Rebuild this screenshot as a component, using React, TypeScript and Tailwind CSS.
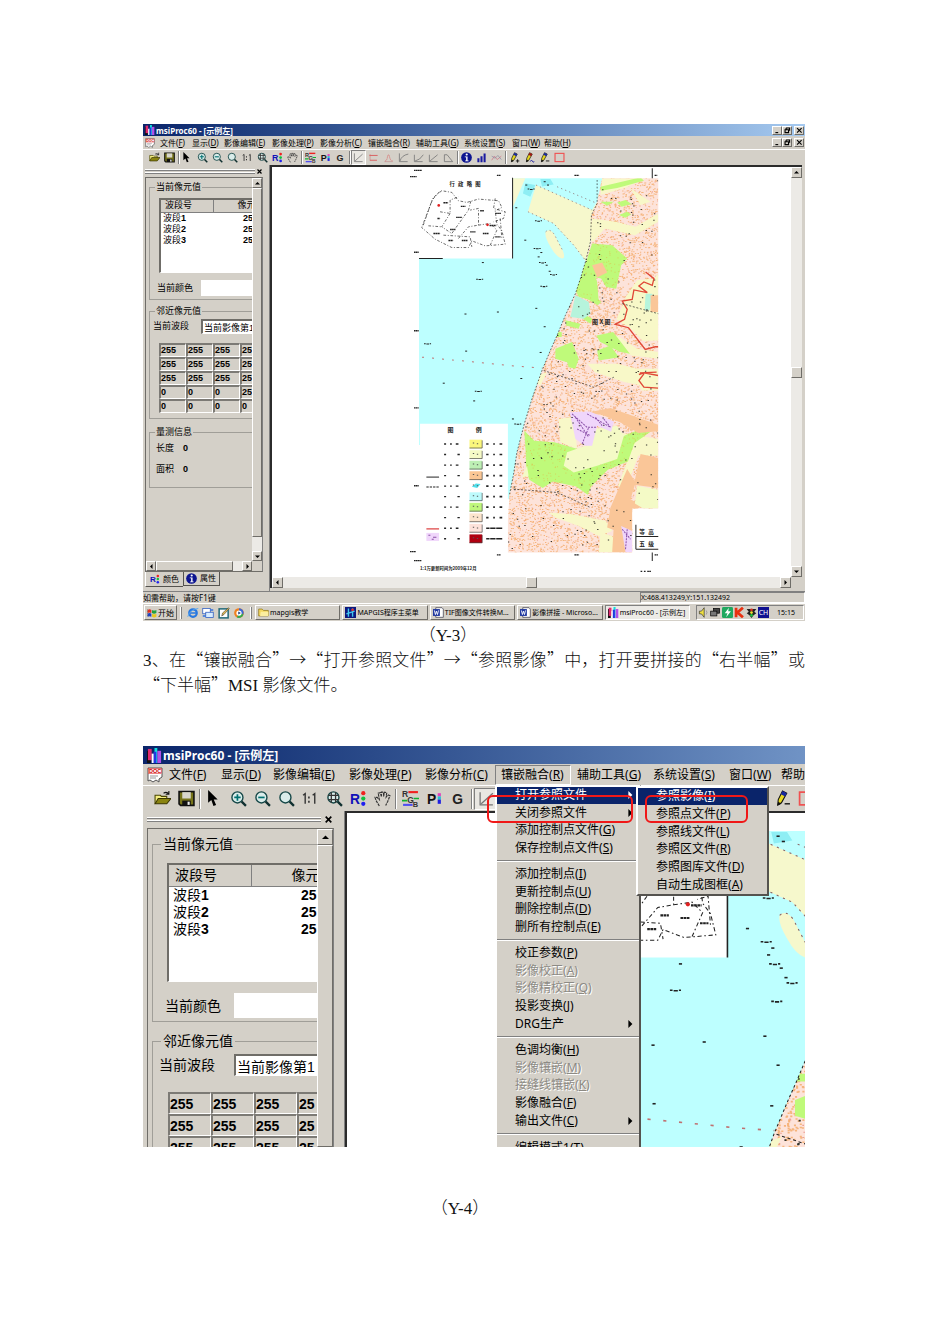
import React from "react";

type Size = "sm" | "lg";

const bevel = "border border-t-white border-l-white border-r-[#6f6d68] border-b-[#6f6d68] bg-[#d4d0c8]";
const sunken = "border border-t-[#808080] border-l-[#808080] border-r-white border-b-white";

/* ---------- sizes shared by the two screens ---------- */

const sizes = {
  sm: {
    title: "h-3 pl-[2px] gap-px text-[8px]",
    titleIcon: "size-[10px]",
    menuBar: "h-[13px] pl-[2px] text-[8px] leading-[12px]",
    docIcon: "size-[10px] mr-[5px]",
    menuShort: "w-8",
    menuWide: "w-12",
    toolbar: "h-4 pl-1",
    tool: "w-[15px] h-[15px]",
    icon: "size-[11px]",
    sep: "w-[3px] h-[13px]",
    dock: "w-[127px] text-[9px] leading-[11px]",
    grip: "h-3 pl-[2px] pr-[7px] gap-[2px] text-[8px]",
    box: "ml-[2px] mr-[6px] h-[395px]",
    scroll: "w-[10px]",
    scrollBtn: "h-[10px]",
    arrow: "size-[5px]",
    content: "pl-[3px] pt-1",
    legend: "ml-[5px] px-px",
    group1: "h-[118px]",
    list: "mt-[5px] ml-[9px] h-[75px]",
    table: "w-[92px]",
    th: "h-3 pl-1",
    td: "h-[11px] pl-[2px]",
    colA: "w-[52px]",
    numCell: "pl-[30px]",
    numHead: "pl-6",
    colorRow: "mt-[7px] ml-[7px] h-4",
    label: "w-[44px]",
    group2: "mt-[6px] h-[113px]",
    bandRow: "mt-[2px] ml-[3px] h-[15px]",
    bandLabel: "w-[48px]",
    grid: "mt-[9px] ml-[9px] w-[108px]",
    cell: "h-[14px] w-[27px] leading-[11px]",
  },
  lg: {
    title: "h-[18px] pl-1 gap-px text-[12px]",
    titleIcon: "size-[15px]",
    menuBar: "h-[21px] pl-1 text-[12px] leading-[20px]",
    docIcon: "size-4 mr-[6px]",
    menuShort: "w-[52px]",
    menuWide: "w-[76px]",
    toolbar: "h-[26px] pl-[7px]",
    tool: "w-6 h-[22px]",
    icon: "size-[17px]",
    sep: "w-1 h-5",
    dock: "w-[202px] text-[14px] leading-[16px]",
    grip: "h-[17px] pl-1 pr-[12px] gap-[4px] text-[12px]",
    box: "ml-1 mr-[10px] flex-1 border-b-0",
    scroll: "w-[16px]",
    scrollBtn: "h-[16px]",
    arrow: "size-[7px]",
    content: "pl-1 pt-[7px]",
    legend: "ml-[8px] px-[2px]",
    group1: "h-[186px]",
    list: "mt-[11px] ml-[14px] h-[119px]",
    table: "w-[148px]",
    th: "h-[21px] pl-[6px]",
    td: "h-[17px] pl-[4px]",
    colA: "w-[82px]",
    numCell: "pl-[50px]",
    numHead: "pl-10",
    colorRow: "mt-[11px] ml-[12px] h-[25px]",
    label: "w-[69px]",
    group2: "mt-[11px] h-[180px]",
    bandRow: "mt-[5px] ml-[6px] h-[22px]",
    bandLabel: "w-[75px]",
    grid: "mt-[16px] ml-[15px] w-[172px]",
    cell: "h-[22px] w-[43px] leading-[18px]",
  },
};

/* ---------- icons ---------- */

function Svg({ c, children, box = "0 0 16 16" }: { c: string; children: React.ReactNode; box?: string }) {
  return (
    <svg viewBox={box} className={`${c} shrink-0`} aria-hidden="true">
      {children}
    </svg>
  );
}

function AppIcon({ c }: { c: string }) {
  return (
    <Svg c={c}>
      <rect x="0" y="3" width="4" height="13" fill="#111" />
      <rect x="1" y="1" width="4" height="12" fill="#e02a70" />
      <rect x="5" y="6" width="3" height="10" fill="#fff" />
      <rect x="8" y="0" width="3" height="16" fill="#10e0e0" />
      <rect x="7" y="4" width="3" height="12" fill="#2038e0" />
      <rect x="11" y="3" width="4" height="13" fill="#b050e8" />
    </Svg>
  );
}

function DocIcon({ c }: { c: string }) {
  return (
    <Svg c={c}>
      <path d="M1 1h14v9l-3 2v3l-3-2-3 2-3-2-2 1z" fill="#fff" stroke="#555" strokeWidth="1" />
      <rect x="1.500" y="1.500" width="13" height="5" fill="#fff" stroke="#d33" strokeWidth=".6" />
      <text x="2" y="6" fontSize="5.500" fontWeight="700" fill="#d00000" fontFamily="Liberation Sans">DOC</text>
      <path d="M3 9h8M3 11h6" stroke="#999" />
    </Svg>
  );
}

function Lens({ c, children }: { c: string; children?: React.ReactNode }) {
  return (
    <Svg c={c}>
      <circle cx="7" cy="7" r="5.200" fill="#d9ecea" stroke="#164848" strokeWidth="1.300" />
      {children}
      <path d="M11 11l4 4" stroke="#103030" strokeWidth="2.200" />
    </Svg>
  );
}

function Pencil({ c, tip, children }: { c: string; tip: string; children: React.ReactNode }) {
  return (
    <Svg c={c}>
      <path d="M8 1l4 2-5 9-3.500 2 .5-5z" fill="#e8d820" stroke="#111" strokeWidth="1" />
      <path d="M8 1l4 2-1.500 3-4-2z" fill={tip} />
      <path d="M3 15l1-4 3 2z" fill="#111" />
      {children}
    </Svg>
  );
}

function InfoIcon({ c }: { c: string }) {
  return (
    <Svg c={c}>
      <circle cx="8" cy="8" r="7.800" fill="#0c1490" />
      <circle cx="8.300" cy="3.600" r="1.600" fill="#fff" />
      <path d="M5.500 6.500h4v6h1.500v1h-5v-1h1.500V7.500h-2z" fill="#fff" />
    </Svg>
  );
}

const toolIcons: { name: string; draw: (c: string) => React.ReactNode; on?: boolean }[] = [
  { name: "打开", draw: (c) => (
    <Svg c={c}>
      <path d="M1 13V5h5l1 1h5v3" fill="#f4ee80" stroke="#4a4600" />
      <path d="M1 13l3-5h12l-4 5z" fill="#8a8410" stroke="#3a3600" />
      <path d="M9 3q3-2 5 1M14 1v3h-3" fill="none" stroke="#111" />
    </Svg>) },
  { name: "保存", draw: (c) => (
    <Svg c={c}>
      <path d="M1 1.500h14v13H2.500L1 13z" fill="#77741a" stroke="#111" strokeWidth="1.500" />
      <rect x="4" y="2" width="8" height="6" fill="#d8d6cc" />
      <rect x="4" y="10" width="8" height="4.500" fill="#111" />
      <rect x="9" y="11" width="2" height="3" fill="#eee" />
    </Svg>) },
  { name: "|", draw: () => null },
  { name: "选择", draw: (c) => <Svg c={c}><path d="M2 0v12l3-2.500L7 15l2.500-1-2.200-5H11z" fill="#000" /></Svg> },
  { name: "放大", draw: (c) => <Lens c={c}><path d="M4 7h6M7 4v6" stroke="#007070" strokeWidth="1.600" /></Lens> },
  { name: "缩小", draw: (c) => <Lens c={c}><path d="M4 7h6" stroke="#007070" strokeWidth="1.600" /></Lens> },
  { name: "窗口", draw: (c) => <Lens c={c} /> },
  { name: "原始比例", draw: (c) => (
    <Svg c={c}><path d="M1 5l2-1.500V13M10 5l2-1.500V13" fill="none" stroke="#333" strokeWidth="1.300" /><path d="M6.500 6v2M6.500 10v2" stroke="#333" strokeWidth="1.500" /></Svg>) },
  { name: "全图", draw: (c) => <Lens c={c}><path d="M2 5h10M2 9h10M5 2v10M9 2v10" stroke="#333" strokeWidth="1.200" /></Lens> },
  { name: "红绿蓝", draw: (c) => (
    <Svg c={c}>
      <text x="0" y="13" fontSize="13" fontWeight="700" fill="#1010b8" fontFamily="Liberation Sans">R</text>
      <circle cx="12.500" cy="3" r="2" fill="#f02020" /><circle cx="12.500" cy="8" r="2" fill="#10c040" /><circle cx="12.500" cy="13" r="2" fill="#2020f0" />
    </Svg>) },
  { name: "漫游", draw: (c) => (
    <Svg c={c}>
      <path d="M5 15l-3-5-1-3 2 0 2 2-1-6 2-.5 1 4V2h2v4l1-4 2 .5-.5 4 1.500-2 2 1-2 5-2 4" fill="none" stroke="#333" strokeWidth="1.100" strokeDasharray="2.500 .8" />
    </Svg>) },
  { name: "|", draw: () => null },
  { name: "波段组合", draw: (c) => (
    <Svg c={c}>
      <text x="0" y="7" fontSize="8" fontWeight="700" fill="#333" fontFamily="Liberation Sans">R</text>
      <text x="5" y="12" fontSize="8" fontWeight="700" fill="#333" fontFamily="Liberation Sans">G</text>
      <text x="10" y="16" fontSize="7" fontWeight="700" fill="#333" fontFamily="Liberation Sans">B</text>
      <path d="M6 2h9" stroke="#f02020" strokeWidth="2" /><path d="M0 10h5M11 8h5" stroke="#10b030" strokeWidth="1.500" /><path d="M1 14h9" stroke="#5050f0" strokeWidth="2" />
    </Svg>) },
  { name: "调色板", draw: (c) => (
    <Svg c={c}>
      <text x="1" y="13" fontSize="13" fontWeight="700" fill="#111" fontFamily="Liberation Sans">P</text>
      <rect x="11" y="3" width="3" height="3" fill="#e040c0" /><rect x="11" y="6" width="3" height="3" fill="#20c0d0" /><rect x="11" y="9" width="3" height="4" fill="#2020e0" />
    </Svg>) },
  { name: "灰度", draw: (c) => (
    <Svg c={c}><text x="2" y="13" fontSize="13" fontWeight="700" fill="#222" fontFamily="Liberation Sans">G</text></Svg>) },
  { name: "||", draw: () => null },
  { name: "线性", on: true, draw: (c) => <Svg c={c}><path d="M2 2v12h12M3 13L14 3" fill="none" stroke="#777" strokeWidth="1.200" /></Svg> },
  { name: "均衡", draw: (c) => <Svg c={c}><path d="M3 3v10" fill="none" stroke="#c88" /><path d="M2 5h12M3 12h10" stroke="#d86060" strokeWidth="1.400" /></Svg> },
  { name: "正态", draw: (c) => <Svg c={c}><path d="M2 14h12" fill="none" stroke="#c09090" /><path d="M3 13c4 0 3-9 5-9s1 9 6 9" fill="none" stroke="#d87070" strokeWidth="1.200" strokeDasharray="2 1" /></Svg> },
  { name: "对数", draw: (c) => <Svg c={c}><path d="M2 2v12h12M3 13Q5 5 15 3" fill="none" stroke="#777" strokeWidth="1.200" /></Svg> },
  { name: "指数", draw: (c) => <Svg c={c}><path d="M2 4v10h12M3 13Q10 12 15 4" fill="none" stroke="#777" strokeWidth="1.200" /></Svg> },
  { name: "平方", draw: (c) => <Svg c={c}><path d="M2 4v10h12M3 13L14 4" fill="none" stroke="#777" strokeWidth="1.200" /></Svg> },
  { name: "反转", draw: (c) => <Svg c={c}><path d="M2 4v10h12L6 4H2" fill="none" stroke="#777" strokeWidth="1.200" /></Svg> },
  { name: "|", draw: () => null },
  { name: "信息", draw: (c) => <InfoIcon c={c} /> },
  { name: "直方图", draw: (c) => <Svg c={c}><path d="M3.500 9v6M8 6v9M12.500 2v13" stroke="#1a1aa0" strokeWidth="3" /></Svg> },
  { name: "曲线", draw: (c) => <Svg c={c}><path d="M1 12l4-6 4 5 6-5" fill="none" stroke="#d07080" /><path d="M1 6l5 3 4-4 5 6" fill="none" stroke="#8888a0" /></Svg> },
  { name: "|", draw: () => null },
  { name: "添加", draw: (c) => <Pencil c={c} tip="#1828a0"><path d="M10 13h5M12.500 10.500v5" stroke="#111" strokeWidth="1.300" /></Pencil> },
  { name: "修改", draw: (c) => <Pencil c={c} tip="#a01818"><path d="M9 14q2-4 3-1t3 1" fill="none" stroke="#2020a0" strokeWidth="1.300" /></Pencil> },
  { name: "删除", draw: (c) => <Pencil c={c} tip="#1828a0"><path d="M10 13h5" stroke="#111" strokeWidth="1.300" /></Pencil> },
  { name: "矩形", draw: (c) => <Svg c={c}><rect x="1.500" y="2" width="13" height="12" fill="none" stroke="#f05050" strokeWidth="1.600" /></Svg> },
];

function Tri({ c, dir }: { c: string; dir: "up" | "down" | "left" | "right" }) {
  const d = { up: "M0 7l5-5 5 5z", down: "M0 3l5 5 5-5z", left: "M7 0L2 5l5 5z", right: "M3 0l5 5-5 5z" }[dir];
  return <Svg c={c} box="0 0 10 10"><path d={d} fill="#000" /></Svg>;
}

/* ---------- map ---------- */

function random(seed: number) {
  let s = seed;
  return () => {
    s = (s * 16807) % 2147483647;
    return s / 2147483647;
  };
}

function speckle(seed: number, n: number, x0: number, y0: number, x1: number, y1: number, len: number) {
  const r = random(seed);
  let d = "";
  for (let i = 0; i < n; i++) {
    d += `M${Math.round(x0 + r() * (x1 - x0))} ${Math.round(y0 + r() * (y1 - y0))}h${len}`;
  }
  return d;
}

const land =
  "M605 40H773V1028H695V1160H323V1060L328 985 340 925 350 860 372 775 395 700 425 615 450 555 470 510 495 450 525 385 540 340 555 290 570 230 573 150 590 110z";
const orangeDots = speckle(11, 8200, 323, 40, 773, 1160, 4);
const redDots = speckle(29, 700, 323, 40, 773, 1160, 3);
const greenDots = speckle(7, 3000, 323, 40, 773, 1160, 3);
const blackDots = speckle(53, 420, 323, 40, 773, 1160, 4);
const seaMarks = [
  [412, 167], [372, 225], [245, 292], [236, 342], [193, 446], [290, 440], [428, 363], [405, 429], [430, 484], [80, 535],
  [195, 557], [418, 561], [457, 328], [420, 262], [412, 275], [424, 292], [436, 300], [445, 318], [408, 250], [128, 653],
  [219, 706], [232, 677], [360, 639], [335, 760], [350, 775], [345, 128], [375, 60], [390, 72], [430, 50], [440, 60],
];
const legendFills = ["#fbf77c", "#f6fac6", "#bdf0b4", "#fac694", "none", "#bdfafc", "#bff77c", "#fce4cc", "#fde2da", "#b00010"];

function MapDrawing({ box, id }: { box: string; id: string }) {
  return (
    <svg viewBox={box} preserveAspectRatio="xMinYMin slice" className="block size-full" role="img" aria-label="示例左">
      <defs>
        <clipPath id={id}><path d={land} /></clipPath>
        <clipPath id={`${id}-green`}>
          <path d="M372 795l30 30 60 5 70 20 40 0 50-15 60-30 55-20 15 12-50 35-20 55-60 25-50 50-10 25-35-25-70-15-30 20-40-25-10-30 0-40zM575 235l60 5 45 40-18 20-15 70-30-5-15-25-50-10-15 20 15 30 30 10 20 20-10 10-50-30-20-20 20-60 15-20z" />
        </clipPath>
      </defs>
      <path d="M57 280H337V40H610L600 300 430 640 325 1000H323V774H60V838H57z" fill="#bdffff" />
      <path d="M337 40h38l-35 82h-3z" fill="#f8f8d0" />
      <path d="M407 60l168 75 15-25-17 60-3 60-14 58-36-48-60-65-77-35z" fill="#f6f8cc" />
      <path d="M436 200q12-12 26 8l26 50q8 24-4 22-18-6-34-36-18-30-14-44z" fill="#f6f8cc" />
      <path d="M375 55l30 5-15 35-22-10zM420 42h30l10 16-35 6z" fill="#8eeef4" />
      <path d={land} fill="#fde3da" />
      <g clipPath={`url(#${id})`}>
        <path d={orangeDots} stroke="#f5b47c" strokeWidth="3" />
        <path d={redDots} stroke="#eb9a92" strokeWidth="2" />
        <g fill="#f8f8c8">
          <path d="M605 40h130l-60 28-75 22zM690 70l60 40-30 10zM575 160l70 10 60 15 68-40v25l-70 40-90-20-35 40-15-10z" />
          <path d="M710 345l50-5 13-15v200l-45 2-40-40-40-25 30-70z" />
          <path d="M590 520l60-10 60 40 63 10v20l-80-10-60-30zM560 595h90l60 15h63v60l-100-20-90-30zM380 640l60-20-20 40z" />
          <path d="M700 620h73v55h-50z" />
          <path d="M475 760l35-5 15 45 5 50-50-20z" />
          <path d="M650 800l123 20v50l-60 0-40 110-20-20 30-80z" />
          <path d="M445 1040l70 5 100 20 20 30-40 15-60-30-70-25zM600 1100l35 10 20 50h-60z" />
        </g>
        <g fill="#bffa7a">
          <path d="M600 65l120-28 10 10-80 22-48 8zM600 110l40 0-20 12zM650 112l25-7 18 12-30 8zM655 150l25-10 12 8-18 10z" />
          <path d="M575 235l60 5 45 40-18 20-15 70-30-5-15-25-50-10-15 20 15 30 30 10 20 20-10 10-50-30-20-20 20-60 15-20z" />
          <path d="M530 340l50-20 10 30 5 60-60-15-10-20z" />
          <path d="M495 465l45 10-5 15-38-10zM588 510l50-10 50 65-30-6-60-30zM590 555l40-15 25 35-60 10zM465 550l50-20 20 50-10 30-20-5-5-15-35-10zM470 500h14v15h-20zM540 440l35 20-5 15-30-20z" />
          <path d="M372 795l30 30 60 5 70 20 40 0 50-15 60-30 55-20 15 12-50 35-20 55-60 25-50 50-10 25-35-25-70-15-30 20-40-25-10-30 0-40z" />
        </g>
        <path d={greenDots} stroke="#dcc050" strokeWidth="2" clipPath={`url(#${id}-green)`} />
        <path d="M500 860l70-25 10-45 70-10 20 30-20 70-60 20-70 20-30-20zM380 900l-15 35 20-5z" fill="#f4fac6" />
        <path d="M510 455l15-65 40 20 5 35-20 15zM735 385h20l-8 50h-15z" fill="#b6f4dc" />
        <g fill="#fac698">
          <path d="M750 390h23v50h-23zM575 300l30-8 15 30-30 15zM540 745l90-18 143 50v20l-60 5-50-30-60-25z" />
          <path d="M720 865l53 12v90l-73-10zM680 910l25 40-15 50 35 20-30 20v60h-35l-40-15 10-60z" />
          <path d="M640 1080l55-20v100h-60z" />
        </g>
        <path d="M710 960l63 12v56h-45l-25-15z" fill="#f4fac6" />
        <path d="M508 740l60-2 72 30-8 30-42-18-15 60-20 0-30-20zM662 1080l33 15v65h-20z" fill="#f0d6fb" />
        <path d="M515 745l45 40 30 0M525 755l40 60M560 745l70 40M530 790l40 20M545 835l20-50M585 755l20 25M610 760l20 25M665 1090l25 30M680 1090l-5 60" fill="none" stroke="#8a50a8" strokeWidth="3" strokeDasharray="6 3" />
        <path d={blackDots} stroke="#34342c" strokeWidth="3" />
        <path d="M735 320l25 20-5 20-25-10-15 12 25 20-40-8-5 28-30 5 15 25-8 30-28 15 40 10 50 65 30-8h18M718 622l50-2M715 627l15-5 43 8M730 625l-15 20 15 20 43 3" fill="none" stroke="#e04838" strokeWidth="4" />
      </g>
      <g fill="none" stroke="#222" strokeWidth="2">
        <path d="M590 45v70l-17 35-3 80-15 60-15 50-15 45-30 65-25 60-20 45-25 60-30 85-23 75-22 85-10 65-12 60" strokeDasharray="5 5" />
        <path d="M407 60l168 75M383 140l77 35 60 65 35 45M470 65l120 50M436 200q12-12 26 8l26 50" strokeDasharray="4 9" stroke="#886060" />
        <path d="M665 415l108 30M340 970l130 10 100 45M430 615l150 50 60-30" strokeDasharray="6 5" />
      </g>
      <path d="M66 575l160 15 120 12 80 6" fill="none" stroke="#c07070" strokeWidth="3" strokeDasharray="6 24" />
      {seaMarks.map(([x, y], i) => (
        <path key={i} d={i % 3 ? `M${x} ${y}h6` : `M${x - 8} ${y}h5m2 1h8m2-1h4`} stroke="#222" strokeWidth="3" />
      ))}
      <g fill="#222" fontFamily="Noto Sans CJK SC" fontWeight="700">
        <text x="575" y="475" fontSize="18">图 X 图</text>
        <text x="148" y="62" fontSize="16">行</text><text x="174" y="62" fontSize="16">政</text>
        <text x="200" y="62" fontSize="16">略</text><text x="225" y="62" fontSize="16">图</text>
        <text x="142" y="798" fontSize="18">图</text><text x="227" y="798" fontSize="18">例</text>
        <text x="60" y="1213" fontSize="13">1:1万更新时间为2009年12月</text>
        <text x="716" y="1104" fontSize="17">等</text><text x="743" y="1104" fontSize="17">高</text>
        <text x="716" y="1139" fontSize="17">五</text><text x="743" y="1139" fontSize="17">级</text>
      </g>
      <path d="M337 38V280M57 280h71M755 10v30M706 1077v73M706 1112h67M706 1150h67M755 1160v25" stroke="#222" strokeWidth="3" />
      <g fill="none" stroke="#222" strokeWidth="2" strokeDasharray="8 5 3 5">
        <path d="M125 77l-25 20-35 90 40 35 50 25 50 0 10-20 40 15 60-5-10-40-15-20-5-40 20-10-10-20-60-5-35 10-25-5-20-25z" />
        <path d="M118 80l-22 25-28 80" />
        <path d="M120 140l30 5v-40l25-10M150 145l-25 40 30 20 50-70 8-30M85 182l40 3M130 210l80 5 5 30M175 220l30-35 30-5v-50l-25 5M235 180l35-5 20 20-20 45M285 100l-5 30 35 10-5 20-30 10M300 160l5 60" />
      </g>
      <path d="M130 113h14M182 124h14M112 160h8M168 157h18M240 137h12M285 145h18M150 193h16M100 205h20M210 200h16M248 205h18M145 226h14M185 226h18M285 215h16M268 181h20M42 16h24M30 35h20M290 31h12M522 31h14M762 31h8M42 261h14M42 496h14M42 727h14M42 960h14M30 1157h18M290 1167h12M522 1167h14M762 1167h10M42 1184h22M720 1216h6m4 0h6m4 0h12" stroke="#222" strokeWidth="4" strokeDasharray="5 1" />
      <circle cx="116" cy="121" r="4" fill="#e02020" /><circle cx="262" cy="179" r="4" fill="#e02020" />
      {legendFills.map((fill, i) => {
        const y = 822 + i * 31.5;
        return (
          <g key={i} transform={`translate(0 ${y})`}>
            {i === 4 ? <path d="M215 15l12-10 14 2-10 12z" fill="#50e0ec" /> : <rect x="208" y="0" width="38" height="26" fill={fill} />}
            {i !== 4 && <path d="M208 25h38V2" fill="none" stroke="#444" strokeWidth="2" />}
            <path d={i % 2 ? "M132 13h6M172 13h7" : "M132 13h6m12 0h5m12 0h8"} stroke="#222" strokeWidth="4" />
            <path d={i > 7 ? "M258 13h10m2 0h16m2 0h18" : "M258 13h7m14 0h5m14 0h8"} stroke="#222" strokeWidth="5" />
            <path d="M218 10h4m8 2h4" stroke="#555" strokeWidth="3" />
          </g>
        );
      })}
      <path d="M79 934h38" stroke="#222" strokeWidth="3" />
      <path d="M79 964h38" stroke="#222" strokeWidth="3" strokeDasharray="7 3" />
      <path d="M79 1089h38" stroke="#e05050" strokeWidth="4" />
      <rect x="79" y="1101" width="38" height="24" fill="#f0d6fb" />
      <path d="M85 1108h6m8 6h10m-14 6h6" stroke="#8a50a8" strokeWidth="3" />
    </svg>
  );
}

/* ---------- window parts ---------- */

function KeyText({ text }: { text: string }) {
  const m = text.match(/^(.*)\((\w)\)$/);
  if (!m) return <>{text}</>;
  return <>{m[1]}(<u>{m[2]}</u>)</>;
}

function WindowButtons() {
  return (
    <span className="ml-auto flex items-center pr-px">
      {[
        ["最小化", "M2 8h4"],
        ["还原", "M3 1.500h5v4M1.500 4h5v4h-5zM3 1.500V4"],
        ["关闭", "M1.500 1.500l6.500 6.500M8 1.500L1.500 8"],
      ].map(([name, d], i) => (
        <button key={name} aria-label={name} className={`${bevel} flex h-[9px] w-[10px] items-center justify-center ${i === 2 ? "ml-[2px]" : ""}`}>
          <Svg c="size-[7px]" box="0 0 10 10"><path d={d} fill="none" stroke="#000" strokeWidth="1.600" /></Svg>
        </button>
      ))}
    </span>
  );
}

function TitleBar({ size }: { size: Size }) {
  const s = sizes[size];
  const sky = size === "sm" ? "to-[#a6caf0]" : "to-[#7093c5]";
  return (
    <header className={`flex shrink-0 items-center bg-linear-to-r from-[#0a246a] ${sky} font-['Noto_Sans','Noto_Sans_CJK_SC',sans-serif] font-bold whitespace-nowrap text-white ${s.title}`}>
      <AppIcon c={s.titleIcon} />
      <span>msiProc60 - [示例左]</span>
      {size === "sm" && <WindowButtons />}
    </header>
  );
}

const menus = ["文件(F)", "显示(D)", "影像编辑(E)", "影像处理(P)", "影像分析(C)", "镶嵌融合(R)", "辅助工具(G)", "系统设置(S)", "窗口(W)", "帮助(H)"];

function MenuBar({ size }: { size: Size }) {
  const s = sizes[size];
  return (
    <nav className={`flex shrink-0 items-center whitespace-nowrap ${s.menuBar}`}>
      <DocIcon c={s.docIcon} />
      {menus.map((m) => {
        const open = size === "lg" && m.startsWith("镶嵌");
        return (
          <div key={m} className={`relative shrink-0 ${m.length > 5 ? s.menuWide : s.menuShort}`}>
            <button className={open ? `${sunken} -ml-[6px] block h-5 w-[76px] pl-[5px] text-left leading-[18px]` : "block"}>
              <KeyText text={m} />
            </button>
            {open && <MergeMenu />}
          </div>
        );
      })}
      {size === "sm" && <WindowButtons />}
    </nav>
  );
}

const mergeGroups = [
  ["打开参照文件", "关闭参照文件", "添加控制点文件(G)", "保存控制点文件(S)"],
  ["添加控制点(I)", "更新控制点(U)", "删除控制点(D)", "删所有控制点(E)"],
  ["校正参数(P)", "影像校正(A)", "影像精校正(Q)", "投影变换(J)", "DRG生产"],
  ["色调均衡(H)", "影像镶嵌(M)", "接缝线镶嵌(K)", "影像融合(F)", "输出文件(C)"],
  ["编辑模式1(T)"],
];
const disabled = ["影像校正(A)", "影像精校正(Q)", "影像镶嵌(M)", "接缝线镶嵌(K)"];
const withArrow = ["打开参照文件", "关闭参照文件", "DRG生产", "输出文件(C)"];
const refItems = ["参照影像(I)", "参照点文件(P)", "参照线文件(L)", "参照区文件(R)", "参照图库文件(D)", "自动生成图框(A)"];

function MenuItem({ text, active }: { text: string; active: boolean }) {
  const off = disabled.includes(text);
  const tone = active ? "bg-[#0a246a] text-white" : off ? "text-[#8c8a84] [text-shadow:1px_1px_0_white]" : "";
  return (
    <button disabled={off} className={`flex flex-1 items-center pr-[5px] pl-[18px] text-left leading-none ${tone}`}>
      <span><KeyText text={text} /></span>
      {withArrow.includes(text) && (
        <span className="ml-auto">
          {active ? <Svg c="size-2" box="0 0 10 10"><path d="M3 0l5 5-5 5z" fill="#fff" /></Svg> : <Tri c="size-2" dir="right" />}
        </span>
      )}
    </button>
  );
}

function MergeMenu() {
  return (
    <div className="absolute top-5 -left-[6px] z-10 w-[146px] border-2 border-t-white border-l-white border-r-[#55534f] border-b-[#55534f] bg-[#d4d0c8]">
      {mergeGroups.map((g, i) => (
        <React.Fragment key={i}>
          {i > 0 && <div className="flex h-[9px] items-center"><hr className="w-full border-t border-b border-t-[#808080] border-b-white" /></div>}
          <div className={`flex flex-col ${g.length === 4 ? "h-[70px]" : g.length === 5 ? "h-[88px]" : "h-[18px]"}`}>
            {g.map((t) => <MenuItem key={t} text={t} active={t === "打开参照文件"} />)}
          </div>
        </React.Fragment>
      ))}
      <div className="absolute -top-px left-[139px] flex h-[110px] w-[133px] flex-col border-2 border-t-white border-l-white border-r-[#55534f] border-b-[#55534f] bg-[#d4d0c8]">
        {refItems.map((t, i) => <MenuItem key={t} text={t} active={i === 0} />)}
      </div>
      <span className="absolute top-2 -left-[10px] h-[28px] w-[146px] rounded-md border-2 border-[#f01818]" />
      <span className="absolute top-2 left-[148px] h-[28px] w-[103px] rounded-md border-2 border-[#f01818]" />
    </div>
  );
}

function Toolbar({ size }: { size: Size }) {
  const s = sizes[size];
  return (
    <div role="toolbar" className={`flex shrink-0 items-center border-t border-t-white ${s.toolbar}`}>
      {toolIcons.map((t, i) =>
        t.name.startsWith("|") ? (
          <span key={i} className={`${s.sep} flex shrink-0 justify-center`}><i className="w-[2px] border-l border-r border-l-[#808080] border-r-white" /></span>
        ) : (
          <button key={i} aria-label={t.name} className={`flex shrink-0 items-center justify-center ${s.tool} ${t.on ? `${sunken} bg-[#e9e7e2]` : ""}`}>
            {t.draw(s.icon)}
          </button>
        ),
      )}
    </div>
  );
}

function Group({ title, c, size, children }: { title: string; c: string; size: Size; children: React.ReactNode }) {
  return (
    <fieldset className={`min-w-0 border border-r-0 border-[#a09e98] ${c}`}>
      <legend className={sizes[size].legend}>{title}</legend>
      {children}
    </fieldset>
  );
}

const cells = [
  ["255", "255", "255", "25"],
  ["255", "255", "255", "25"],
  ["255", "255", "255", "25"],
  ["0", "0", "0", "25"],
  ["0", "0", "0", "0"],
];

function Dock({ size }: { size: Size }) {
  const s = sizes[size];
  const small = size === "sm";
  return (
    <aside className={`flex shrink-0 flex-col border-r border-r-[#808080] font-['Liberation_Sans','Noto_Sans_CJK_SC',sans-serif] ${s.dock}`}>
      <div className={`flex shrink-0 items-center ${s.grip}`}>
        <span className="flex flex-1 flex-col gap-px">
          <i className="border-t border-b border-t-white border-b-[#808080]" />
          <i className="border-t border-b border-t-white border-b-[#808080]" />
        </span>
        <button aria-label="关闭" className="flex">
          <Svg c={s.arrow} box="0 0 10 10"><path d="M1 1l8 8M9 1L1 9" stroke="#000" strokeWidth="2.400" /></Svg>
        </button>
      </div>
      <div className={`flex min-h-0 flex-col border border-[#6f6d68] border-r-[#808080] ${s.box}`}>
        <div className="flex min-h-0 flex-1">
          <div className={`min-w-0 flex-1 overflow-hidden whitespace-nowrap ${s.content}`}>
            <Group title="当前像元值" c={s.group1} size={size}>
              <div className={`overflow-hidden border-t-2 border-b border-l-2 border-t-[#6f6d68] border-b-white border-l-[#6f6d68] bg-white ${s.list}`}>
                <table className={`table-fixed border-collapse ${s.table}`}>
                  <thead>
                    <tr className="bg-[#d4d0c8]">
                      <th className={`border-r border-b border-[#808080] py-0 text-left font-normal ${s.th} ${s.colA}`}>波段号</th>
                      <th className={`border-b border-[#808080] py-0 text-left font-normal ${s.numHead}`}>像元</th>
                    </tr>
                  </thead>
                  <tbody>
                    {[1, 2, 3].map((n) => (
                      <tr key={n}>
                        <td className={s.td}>波段<b>{n}</b></td>
                        <td className={`font-bold ${s.numCell}`}>25</td>
                      </tr>
                    ))}
                  </tbody>
                </table>
              </div>
              <div className={`flex items-center ${s.colorRow}`}>
                <span className={`shrink-0 ${s.label}`}>当前颜色</span>
                <span className="h-full flex-1 bg-white" />
              </div>
            </Group>
            <Group title="邻近像元值" c={s.group2} size={size}>
              <label className={`flex items-center ${s.bandRow}`}>
                <span className={`shrink-0 ${s.bandLabel}`}>当前波段</span>
                <input readOnly value="当前影像第1" className="h-full min-w-0 flex-1 border-t-2 border-b border-l-2 border-t-[#6f6d68] border-b-white border-l-[#6f6d68] bg-white pl-px" />
              </label>
              <table className={`table-fixed border-separate border-spacing-0 ${s.grid}`}>
                <tbody>
                  {cells.map((row, r) => (
                    <tr key={r}>
                      {row.map((v, c) => (
                        <td key={c} className={`border-t-2 border-r border-b border-l-2 border-t-[#7c7a75] border-r-white border-b-white border-l-[#7c7a75] p-0 text-left font-bold ${s.cell}`}>{v}</td>
                      ))}
                    </tr>
                  ))}
                </tbody>
              </table>
            </Group>
            {small && (
              <Group title="量测信息" c="mt-2 h-[61px]" size={size}>
                <dl className="mt-[5px] ml-[6px] grid grid-cols-[27px_auto] gap-y-[10px]">
                  <dt>长度</dt><dd className="font-bold">0</dd>
                  <dt>面积</dt><dd className="font-bold">0</dd>
                </dl>
              </Group>
            )}
          </div>
          <div className={`flex shrink-0 flex-col bg-[#eceae6] ${s.scroll}`}>
            <button aria-label="向上" className={`${bevel} flex shrink-0 items-center justify-center ${s.scrollBtn}`}><Tri c={s.arrow} dir="up" /></button>
            <span className={`${bevel} ${small ? "h-[349px]" : "flex-1"}`} />
            {small && <button aria-label="向下" className={`${bevel} mt-auto flex h-[10px] items-center justify-center`}><Tri c={s.arrow} dir="down" /></button>}
          </div>
        </div>
        {small && (
          <div className="mr-[10px] flex h-[10px] bg-[#eceae6]">
            <button aria-label="向左" className={`${bevel} flex w-[10px] items-center justify-center`}><Tri c={s.arrow} dir="left" /></button>
            <span className={`${bevel} w-[77px]`} />
            <button aria-label="向右" className={`${bevel} ml-auto flex w-[10px] items-center justify-center`}><Tri c={s.arrow} dir="right" /></button>
          </div>
        )}
      </div>
      {small && (
        <div role="tablist" className="ml-[2px] flex items-start text-[8px]">
          <button role="tab" aria-selected="true" className="flex h-[15px] w-[38px] items-center gap-[3px] border-b border-l border-b-[#55534f] border-l-white pl-1">
            {toolIcons[9].draw("size-[10px]")}颜色
          </button>
          <button role="tab" aria-selected="false" className="flex h-[14px] w-[37px] items-center gap-[3px] border border-t-0 border-[#55534f] pl-[2px]">
            <InfoIcon c="size-[11px]" />属性
          </button>
        </div>
      )}
    </aside>
  );
}

function View({ size }: { size: Size }) {
  if (size === "lg") {
    return (
      <div className="min-w-0 flex-1 overflow-hidden border-t-2 border-l-2 border-[#2b2b2b] bg-white">
        <MapDrawing box="-384 6 870 633" id="land-lg" />
      </div>
    );
  }
  return (
    <div className="mr-[3px] mb-[3px] grid min-w-0 flex-1 grid-cols-[1fr_11px] grid-rows-[1fr_11px] border-t-2 border-l-2 border-[#2b2b2b]">
      <div className="min-h-0 min-w-0 overflow-hidden bg-white"><MapDrawing box="-383 6 1557 1227" id="land-sm" /></div>
      <div className="flex flex-col justify-between bg-[#eceae6]">
        <button aria-label="向上" className={`${bevel} flex h-[11px] items-center justify-center`}><Tri c="size-[5px]" dir="up" /></button>
        <span className={`${bevel} h-[11px]`} />
        <button aria-label="向下" className={`${bevel} flex h-[11px] items-center justify-center`}><Tri c="size-[5px]" dir="down" /></button>
      </div>
      <div className="flex justify-between bg-[#eceae6]">
        <button aria-label="向左" className={`${bevel} flex w-[11px] items-center justify-center`}><Tri c="size-[5px]" dir="left" /></button>
        <span className={`${bevel} w-[11px]`} />
        <button aria-label="向右" className={`${bevel} flex w-[11px] items-center justify-center`}><Tri c="size-[5px]" dir="right" /></button>
      </div>
      <div className="bg-[#d4d0c8]" />
    </div>
  );
}

/* ---------- task bar ---------- */

function FolderIcon() {
  return <Svg c="size-[11px]"><path d="M1 13V3h5l2 2h7v8z" fill="#f4d860" stroke="#8a7010" /><path d="M3 13l1-6h11v6z" fill="#fbeea0" /></Svg>;
}
function WordIcon() {
  return (
    <Svg c="size-[11px]">
      <path d="M4 1h9l2 2v12H4z" fill="#fff" stroke="#334" />
      <rect x="0" y="3" width="10" height="10" fill="#2038a0" />
      <path d="M2 5l1.500 6L5 6l1.500 5L8 5" fill="none" stroke="#fff" strokeWidth="1.300" />
    </Svg>
  );
}
function MapgisIcon() {
  return <Svg c="size-[11px]"><rect width="16" height="16" fill="#0c1880" /><path d="M5 2v12M11 2v12M2 10l12-4" stroke="#40c8f0" strokeWidth="2" /><circle cx="11" cy="4" r="2" fill="#e03030" /></Svg>;
}

const tasks: { text: string; icon: React.ReactNode; on?: boolean }[] = [
  { text: "mapgis教学", icon: <FolderIcon /> },
  { text: "MAPGIS程序主菜单", icon: <MapgisIcon /> },
  { text: "TIF图像文件转换M...", icon: <WordIcon /> },
  { text: "影像拼接 - Microso...", icon: <WordIcon /> },
  { text: "msiProc60 - [示例左]", icon: <AppIcon c="size-[11px]" />, on: true },
];

function TaskBar() {
  return (
    <footer className="flex h-[18px] items-center border-t border-t-white pl-px text-[8px] leading-[12px] whitespace-nowrap">
      <button className={`${bevel} flex h-[15px] w-[33px] items-center gap-px pl-[2px]`}>
        <Svg c="size-[10px]">
          <path d="M1 3q3-2 6 0v5q-3-2-6 0z" fill="#e03020" /><path d="M8 3q3 2 7 0v5q-4 2-7 0z" fill="#20a040" />
          <path d="M1 9q3-2 6 0v5q-3-2-6 0z" fill="#2040c0" /><path d="M8 9q3 2 7 0v5q-4 2-7 0z" fill="#e8c820" />
          <path d="M0 2v12" stroke="#111" strokeDasharray="2 1" />
        </Svg>
        开始
      </button>
      <i className="mx-[3px] h-3 border-r border-l border-r-[#808080] border-l-white" />
      <div className="flex w-[62px] justify-around">
        <Svg c="size-3"><circle cx="8" cy="8" r="5" fill="none" stroke="#2878e0" strokeWidth="3" /><path d="M4 8h9" stroke="#2878e0" strokeWidth="2" /><path d="M1 13Q4 3 15 2" fill="none" stroke="#58a8f0" strokeWidth="1.300" /></Svg>
        <Svg c="size-3"><rect x="1" y="2" width="10" height="7" fill="#fff" stroke="#2858c0" /><rect x="5" y="7" width="10" height="7" fill="#d8ecff" stroke="#2858c0" /><path d="M1 12h4M11 4h4" stroke="#3070e0" strokeWidth="2" /></Svg>
        <Svg c="size-3"><rect x="1.500" y="2.500" width="12" height="12" fill="#fff" stroke="#206878" strokeWidth="2" /><path d="M5 12l1-4 8-7 1 1-7 8z" fill="#e0b850" stroke="#333" strokeWidth=".7" /></Svg>
        <Svg c="size-3"><circle cx="8" cy="8" r="6.500" fill="#f08020" /><path d="M8 1.500a6.500 6.500 0 0 1 6 8L8 8z" fill="#3868d8" /><path d="M14 10a6.500 6.500 0 0 1-9 4l3-6z" fill="#30a850" /><circle cx="8" cy="8" r="3.500" fill="#fff" /><path d="M7 6l3.500 2L7 10z" fill="#204080" /></Svg>
      </div>
      <i className="mx-[3px] h-3 border-r border-l border-r-[#808080] border-l-white" />
      <div className="flex min-w-0 flex-1 gap-[2px] text-[7px]">
        {tasks.map((t) => (
          <button key={t.text} className={`flex h-[15px] min-w-0 flex-1 items-center gap-px overflow-hidden pl-[2px] ${t.on ? `${sunken} bg-[#eceae6]` : bevel}`}>
            {t.icon}
            <span>{t.text}</span>
          </button>
        ))}
      </div>
      <div className={`${sunken} mr-px ml-[6px] flex h-[15px] w-[108px] items-center gap-px pl-px`}>
        <Svg c="size-[11px]"><path d="M2 6h3l4-5v14l-4-5H2z" fill="#f0e040" stroke="#333" /><path d="M12 5q2 3 0 6" fill="none" stroke="#888" /></Svg>
        <Svg c="size-[11px]"><rect x="5" y="2" width="9" height="7" fill="#444" stroke="#000" /><rect x="1" y="6" width="9" height="7" fill="#777" stroke="#000" /></Svg>
        <Svg c="size-[11px]"><rect width="16" height="16" rx="2" fill="#20a860" /><path d="M10 1L4 9h4l-2 6 7-9H9z" fill="#fff" /></Svg>
        <Svg c="size-[11px]"><path d="M3 1v14M13 1L5 8l8 7" fill="none" stroke="#e83010" strokeWidth="4" /></Svg>
        <Svg c="size-[11px]"><path d="M1 3h14l-3 4 3 2-4 3-3 4-3-4-4-3 3-2z" fill="#222" /><circle cx="8" cy="4" r="2" fill="#e03020" /><circle cx="8" cy="8" r="2" fill="#f0e030" /><circle cx="8" cy="12" r="2" fill="#20c040" /></Svg>
        <span className="flex h-[11px] w-[11px] items-center justify-center bg-[#101090] text-[7px] text-white">CH</span>
        <time className="mr-2 ml-auto text-[7px]">15:15</time>
      </div>
    </footer>
  );
}

function Screen({ size }: { size: Size }) {
  const small = size === "sm";
  return (
    <figure className={`overflow-hidden bg-[#d4d0c8] font-['Noto_Sans','Noto_Sans_CJK_SC',sans-serif] text-black ${small ? "" : "flex h-[401px] flex-col"}`}>
      <TitleBar size={size} />
      <MenuBar size={size} />
      <Toolbar size={size} />
      <div className={`flex ${small ? "h-[426px]" : "min-h-0 flex-1"}`}>
        <Dock size={size} />
        <View size={size} />
      </div>
      {small && (
        <>
          <div className="flex h-3 items-center border-t border-t-[#808080] text-[8px] leading-[11px]">
            <span className="flex-1">如需帮助，请按F1键</span>
            <span className={`${sunken} h-[11px] w-[165px] text-[7px] leading-[9px]`}>X:468.413249,Y:151.132492</span>
          </div>
          <TaskBar />
        </>
      )}
    </figure>
  );
}

const latin = "font-['Liberation_Serif',serif] font-normal leading-none";

export default function App() {
  return (
    <main lang="zh-CN" className="min-h-[1344px] bg-white pt-[124px] pr-[145px] pl-[143px] font-['Noto_Sans_CJK_SC',sans-serif] text-[17px] leading-[25px] font-light text-[#111]">
      <div className="font-normal">
        <Screen size="sm" />
      </div>
      <p className="pr-[52px] text-center">（<span className={latin}>Y-3</span>）</p>
      <p className="whitespace-nowrap [text-align-last:justify]">
        <span className={latin}>3</span>、在“镶嵌融合”→“打开参照文件”→“参照影像”中，打开要拼接的“右半幅”或
      </p>
      <p>“下半幅”<span className={latin}>MSI </span>影像文件。</p>
      <div className="mt-[50px] font-normal">
        <Screen size="lg" />
      </div>
      <p className="mt-[47px] pr-7 text-center">（<span className={latin}>Y-4</span>）</p>
    </main>
  );
}
